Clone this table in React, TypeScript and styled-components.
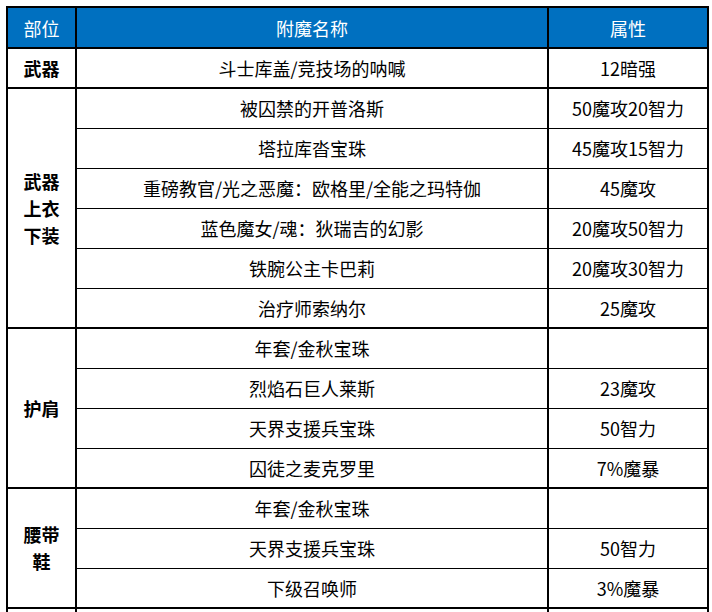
import React from 'react';
import styled, { createGlobalStyle } from 'styled-components';

const Global = createGlobalStyle`
  html, body { margin: 0; padding: 0; background: #fff; }
  body { font-family: "Noto Sans CJK SC", "Microsoft YaHei", sans-serif; }
`;

const Page = styled.div`
  padding: 6px 0 0 6px;
`;

const Table = styled.table`
  border-collapse: collapse;
  table-layout: fixed;
  width: 701px;
  border: 2px solid #000;
  font-size: 18px;
  color: #000;
`;

const Col = styled.col<{ $w: number }>`
  width: ${(p) => p.$w}px;
`;

const HeadCell = styled.th`
  height: 39px;
  padding: 0;
  background: #0070c0;
  color: #fff;
  font-weight: normal;
  text-align: center;
  vertical-align: middle;
  border: 2px solid #000;
  line-height: 24px;
`;

const Row = styled.tr`
  height: 40px;
`;

const Cell = styled.td<{ $start: boolean }>`
  padding: 0;
  text-align: center;
  vertical-align: middle;
  line-height: 24px;
  border: 1px solid #000;
  border-top-width: ${(p) => (p.$start ? '2px' : '1px')};
  border-left-width: 2px;
  border-right-width: 2px;
  white-space: nowrap;
`;

const GroupCell = styled.td`
  padding: 0;
  text-align: center;
  vertical-align: middle;
  font-weight: bold;
  line-height: 27px;
  border: 2px solid #000;
`;

const Line = styled.span`
  display: block;
`;

type Group = { label: string[]; rows: [string, string][] };

const groups: Group[] = [
  { label: ['武器'], rows: [['斗士库盖/竞技场的呐喊', '12暗强']] },
  {
    label: ['武器', '上衣', '下装'],
    rows: [
      ['被囚禁的开普洛斯', '50魔攻20智力'],
      ['塔拉库沓宝珠', '45魔攻15智力'],
      ['重磅教官/光之恶魔：欧格里/全能之玛特伽', '45魔攻'],
      ['蓝色魔女/魂：狄瑞吉的幻影', '20魔攻50智力'],
      ['铁腕公主卡巴莉', '20魔攻30智力'],
      ['治疗师索纳尔', '25魔攻'],
    ],
  },
  {
    label: ['护肩'],
    rows: [
      ['年套/金秋宝珠', ''],
      ['烈焰石巨人莱斯', '23魔攻'],
      ['天界支援兵宝珠', '50智力'],
      ['囚徒之麦克罗里', '7%魔暴'],
    ],
  },
  {
    label: ['腰带', '鞋'],
    rows: [
      ['年套/金秋宝珠', ''],
      ['天界支援兵宝珠', '50智力'],
      ['下级召唤师', '3%魔暴'],
    ],
  },
  { label: [''], rows: [['', '']] },
];

export default function App() {
  return (
    <Page>
      <Global />
      <Table>
        <colgroup>
          <Col $w={69} />
          <Col $w={472} />
          <Col $w={160} />
        </colgroup>
        <thead>
          <tr>
            <HeadCell>部位</HeadCell>
            <HeadCell>附魔名称</HeadCell>
            <HeadCell>属性</HeadCell>
          </tr>
        </thead>
        <tbody>
          {groups.map((g, gi) =>
            g.rows.map((r, ri) => (
              <Row key={`${gi}-${ri}`}>
                {ri === 0 && (
                  <GroupCell rowSpan={g.rows.length}>
                    {g.label.map((l, li) => (
                      <Line key={li}>{l}</Line>
                    ))}
                  </GroupCell>
                )}
                <Cell $start={ri === 0}>{r[0]}</Cell>
                <Cell $start={ri === 0}>{r[1]}</Cell>
              </Row>
            ))
          )}
        </tbody>
      </Table>
    </Page>
  );
}
